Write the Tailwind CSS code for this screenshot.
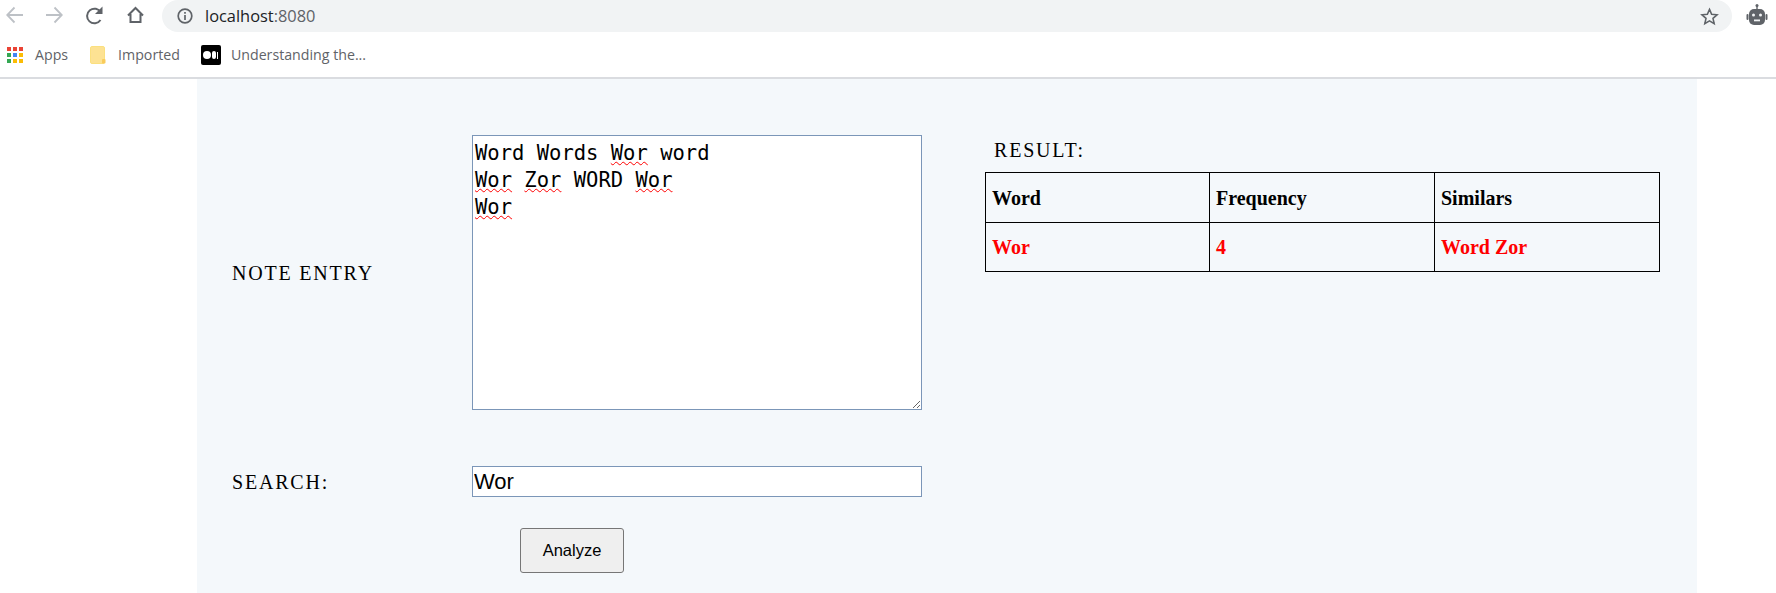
<!DOCTYPE html>
<html lang="en">
<head>
  <meta charset="UTF-8">
  <title>localhost:8080</title>
  <script src="https://cdn.jsdelivr.net/npm/@tailwindcss/browser@4"></script>
</head>
<body class="bg-white h-[593px] overflow-hidden flex flex-col">
  <!-- Browser toolbar -->
  <div class="h-[33px] flex items-start pl-[6px] pr-[8px] font-['Open_Sans',sans-serif]">
    <svg class="w-[17px] h-[30px] mr-[23px]" viewBox="0 0 17 30" fill="none" stroke="#bdc1c6" stroke-width="1.8"><path d="M17 15H1.5M8.5 7.5L1.200 15l7.300 7.500"/></svg>
    <svg class="w-[17px] h-[30px] mr-[23px]" viewBox="0 0 17 30" fill="none" stroke="#bdc1c6" stroke-width="1.8"><path d="M0 15h15.500M8.500 7.500l7.300 7.500-7.300 7.500"/></svg>
    <svg class="w-[17px] h-[30px] mr-[24px]" viewBox="0 0 17 30" fill="none" stroke="#5f6368" stroke-width="2"><path d="M14.500 20a7.300 7.300 0 1 1 .3-7.500"/><path d="M16.500 6.500v7.500H9z" fill="#5f6368" stroke="none"/></svg>
    <svg class="w-[17px] h-[30px] mr-[18px]" viewBox="0 0 17 30" fill="none" stroke="#5f6368" stroke-width="2"><path d="M1 15.500L8.500 8l7.500 7.500M3.500 14v8h10v-8"/></svg>
    <div class="flex-1 h-[32px] bg-[#f1f3f4] rounded-[16px] flex items-center pl-[15px] pr-[13px]">
      <svg class="w-[16px] h-[16px] mr-[12px]" viewBox="0 0 16 16" fill="none" stroke="#5f6368" stroke-width="1.7"><circle cx="8" cy="8" r="6.800"/><path d="M8 7v5M8 4v1.800"/></svg>
      <span class="text-[16.400px] text-[#202124]">localhost<span class="text-[#5f6368]">:8080</span></span>
      <svg class="w-[19px] h-[19px] ml-auto" viewBox="0 0 24 24" fill="none" stroke="#5f6368" stroke-width="2"><path d="M12 3l2.700 6.200 6.800.6-5.100 4.500 1.500 6.700L12 17.500 6.100 21l1.500-6.700L2.500 9.800l6.800-.6z"/></svg>
    </div>
    <svg class="w-[22px] h-[22px] ml-[14px] mt-[4px]" viewBox="0 0 22 22" fill="#5f6368"><circle cx="11" cy="1.600" r="1.500"/><rect x="10.300" y="2" width="1.400" height="4"/><rect x="3" y="5" width="16" height="16" rx="5"/><rect x="0.500" y="10" width="2" height="6" rx="1"/><rect x="19.500" y="10" width="2" height="6" rx="1"/><circle cx="7.500" cy="11" r="1.500" fill="#f1f3f4"/><circle cx="14.500" cy="11" r="1.500" fill="#f1f3f4"/><rect x="8" y="15.500" width="6" height="1.800" fill="#f1f3f4"/></svg>
  </div>
  <!-- Bookmarks bar -->
  <div class="h-[44px] flex items-center pl-[7px] text-[14.200px] text-[#5f6368] font-['Open_Sans',sans-serif] border-b-2 border-[#dadce0] box-content">
    <div class="grid grid-cols-3 gap-[2px] w-[16px] h-[16px] mr-[12px]">
      <i class="bg-[#ea4335]"></i><i class="bg-[#ea4335]"></i><i class="bg-[#ea4335]"></i>
      <i class="bg-[#34a853]"></i><i class="bg-[#4285f4]"></i><i class="bg-[#fbbc05]"></i>
      <i class="bg-[#34a853]"></i><i class="bg-[#fbbc05]"></i><i class="bg-[#fbbc05]"></i>
    </div>
    <span class="mr-[22px]">Apps</span>
    <svg class="w-[16px] h-[18px] mr-[12px]" viewBox="0 0 16 18"><rect x="0.500" y="0.500" width="14" height="17" rx="1.500" fill="#fde293" stroke="#fbe07f"/><rect x="12" y="13" width="3.500" height="4.500" rx="1" fill="#f9cb5a"/></svg>
    <span class="mr-[21px]">Imported</span>
    <div class="w-[20px] h-[20px] bg-black rounded-[2px] flex items-center justify-center gap-[1px] mr-[10px]">
      <i class="w-[8px] h-[8px] rounded-full bg-white"></i><i class="w-[4px] h-[8px] rounded-full bg-white"></i><i class="w-[1px] h-[7px] bg-white"></i>
    </div>
    <span>Understanding the...</span>
  </div>

  <!-- App panel -->
  <main class="w-[1500px] ml-[197px] flex-1 bg-[#f4f8fb] flex font-['Liberation_Serif',serif] text-black">
    <div class="w-[725px] pl-[35px] pt-[56px]">
      <div class="flex items-center">
        <label class="w-[240px] text-[20px] tracking-[1.800px]">NOTE ENTRY</label>
        <div class="relative w-[450px] h-[275px]">
          <textarea spellcheck="false" class="w-full h-full block bg-white border border-[#7b96b8] px-[2px] pt-[4px] font-['DejaVu_Sans_Mono',monospace] text-[20.500px] leading-[27px] outline-none">Word Words Wor word
Wor Zor WORD Wor
Wor</textarea>
          <!-- spellcheck squiggles, the text under them is the textarea's -->
          <div class="absolute inset-0 px-[3px] pt-[5px] font-['DejaVu_Sans_Mono',monospace] text-[20.500px] leading-[27px] text-transparent pointer-events-none whitespace-pre">Word Words <span class="underline decoration-wavy decoration-[#ff0000] decoration-1">Wor</span> word
<span class="underline decoration-wavy decoration-[#ff0000] decoration-1">Wor</span> <span class="underline decoration-wavy decoration-[#ff0000] decoration-1">Zor</span> WORD <span class="underline decoration-wavy decoration-[#ff0000] decoration-1">Wor</span>
<span class="underline decoration-wavy decoration-[#ff0000] decoration-1">Wor</span></div>
        </div>
      </div>
      <div class="flex items-center mt-[56px]">
        <label class="w-[240px] text-[20px] tracking-[1.800px] pt-[1px]">SEARCH:</label>
        <input value="Wor" class="w-[450px] h-[31px] bg-white border border-[#7b96b8] px-[1px] font-['Liberation_Sans',sans-serif] text-[22px] outline-none">
      </div>
      <button class="block ml-[288px] mt-[31px] w-[104px] h-[45px] bg-[#efefef] border border-[#767676] rounded-[3px] font-['Liberation_Sans',sans-serif] text-[16.500px]">Analyze</button>
    </div>
    <div class="w-[676px] ml-[63px] pt-[55px]">
      <h2 class="pl-[9px] text-[20px] tracking-[1.800px] leading-[32px] h-[38px]">RESULT:</h2>
      <table class="w-[675px] table-fixed border-collapse text-[20px] font-bold">
        <tr class="h-[50px]">
          <th class="w-[224px] border border-black px-[6px] text-left">Word</th>
          <th class="w-[225px] border border-black px-[6px] text-left">Frequency</th>
          <th class="border border-black px-[6px] text-left">Similars</th>
        </tr>
        <tr class="h-[49px] text-[#ff0000]">
          <td class="border border-black px-[6px]">Wor</td>
          <td class="border border-black px-[6px]">4</td>
          <td class="border border-black px-[6px]">Word Zor</td>
        </tr>
      </table>
    </div>
  </main>
</body>
</html>
